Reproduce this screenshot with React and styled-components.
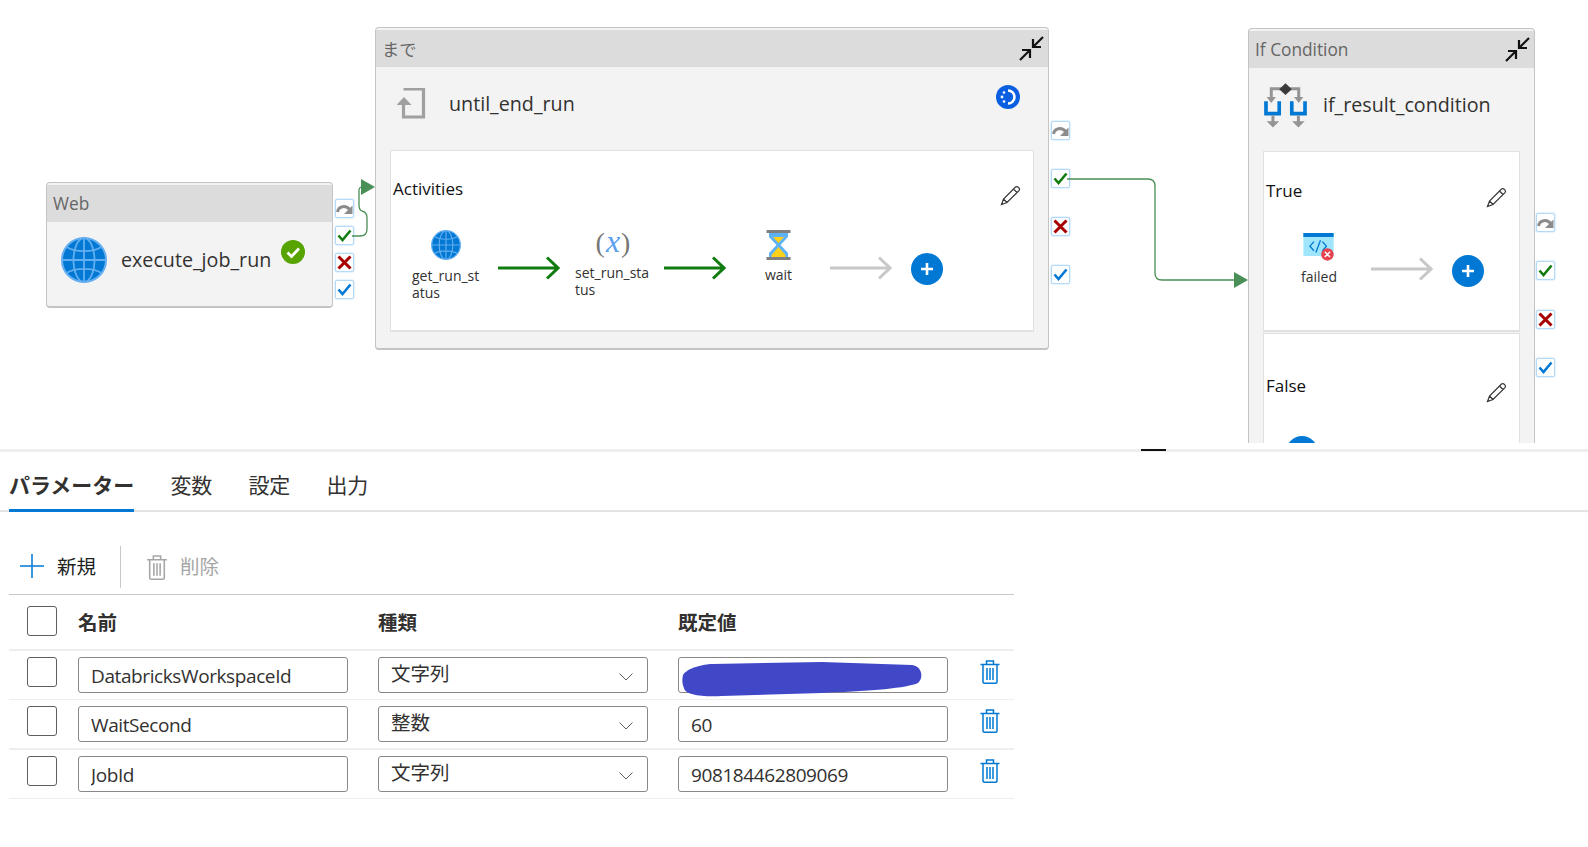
import React from 'react';
import styled, { createGlobalStyle } from 'styled-components';

const GlobalStyle = createGlobalStyle`
  html, body {
    margin: 0;
    background: #fff;
    font-family: "Open Sans", "Noto Sans CJK JP", sans-serif;
    color: #323130;
  }
`;

const Canvas = styled.div`
  position: relative;
  height: 443px;
  overflow: hidden;
  margin-bottom: 6px;
`;

const Placed = styled.div`
  position: absolute;
  left: ${(p) => p.$x}px;
  top: ${(p) => p.$y}px;
`;

const Wires = styled.svg`
  position: absolute;
  left: 0;
  top: 0;
  pointer-events: none;
`;

const Node = styled.div`
  box-sizing: border-box;
  width: ${(p) => p.$w}px;
  height: ${(p) => p.$h}px;
  padding-top: 2px;
  background: #f3f3f3;
  border: 1px solid #c4c4c4;
  border-bottom-width: 2px;
  border-radius: 4px;
`;

const NodeHeader = styled.div`
  display: flex;
  align-items: center;
  justify-content: space-between;
  height: 37px;
  padding: 0 3px 0 6px;
  background: #dcdcdc;
  color: #666;
  font-size: 17.3px;
`;

const NodeTitle = styled.div`
  display: flex;
  align-items: center;
  height: ${(p) => p.$h}px;
  padding-left: ${(p) => p.$pad}px;
  font-size: 19.7px;
  color: #323130;
`;

const TitleText = styled.span`
  margin-left: ${(p) => p.$gap}px;
  margin-bottom: 2px;
`;

const StatusDot = styled.svg`
  margin: -16px 0 0 10px;
`;

const SpinnerDot = styled.svg`
  margin-left: auto;
  margin-right: 28px;
  margin-top: -14px;
`;

const PinStack = styled.div`
  display: flex;
  flex-direction: column;
  gap: ${(p) => p.$gap}px;
`;

const Pin = styled.div`
  display: flex;
  align-items: center;
  justify-content: center;
  width: 19px;
  height: 19px;
  background: #fff;
  border: 1px solid #b4daf7;
  border-radius: 2px;
  box-shadow: 0 0 2px #a6d3f5;
  box-sizing: border-box;
`;

const Panel = styled.div`
  box-sizing: border-box;
  margin: ${(p) => p.$mt}px 14px 0;
  height: ${(p) => p.$h}px;
  background: #fff;
  border: 1px solid #e1e1e1;
  border-bottom-width: 2px;
`;

const PanelHead = styled.div`
  display: flex;
  justify-content: space-between;
  align-items: flex-start;
  padding: ${(p) => p.$top}px 12px 0 2px;
`;

const PanelName = styled.div`
  font-size: 17px;
  line-height: 22px;
  font-weight: 500;
  color: #111;
`;

const Pencil = styled.svg`
  margin-top: 7px;
`;

const FlowRow = styled.div`
  display: flex;
  align-items: flex-start;
  margin-top: ${(p) => p.$mt}px;
  padding-left: ${(p) => p.$pad}px;
`;

const Activity = styled.div`
  display: flex;
  flex-direction: column;
  align-items: center;
  flex: none;
  width: ${(p) => p.$w}px;
  margin-left: ${(p) => p.$ml || 0}px;
`;

const IconSlot = styled.div`
  display: flex;
  align-items: center;
  justify-content: center;
  height: 30px;
`;

const ActivityLabel = styled.div`
  width: fit-content;
  max-width: 100%;
  margin-top: ${(p) => p.$mt}px;
  font-size: 14px;
  line-height: 17px;
  word-break: break-all;
  color: #323130;
`;

const Formula = styled.div`
  margin-bottom: 6px;
  font-family: "Liberation Serif", serif;
  font-size: 28px;
  line-height: 30px;
  color: #777;
  em {
    color: #5b9ff0;
    font-size: 32px;
    font-style: italic;
    margin: 0 1px;
  }
`;

const FlowArrow = styled.svg`
  flex: none;
  margin-left: ${(p) => p.$ml}px;
  margin-top: ${(p) => p.$mt}px;
`;

const AddButton = styled.div`
  display: flex;
  align-items: center;
  justify-content: center;
  flex: none;
  width: 32px;
  height: 32px;
  margin-left: ${(p) => p.$ml || 0}px;
  margin-top: ${(p) => p.$mt || 0}px;
  border-radius: 50%;
  background: #0078d4;
`;

const Splitter = styled.div`
  position: relative;
  height: 3px;
  background: #eee;
`;

const SplitterHandle = styled.div`
  position: absolute;
  left: 1141px;
  top: 0;
  width: 25px;
  height: 2px;
  background: #111;
`;

const TabBar = styled.div`
  display: flex;
  gap: 36px;
  box-sizing: border-box;
  height: 60px;
  padding-left: 9px;
  border-bottom: 2px solid #e3e3e3;
`;

const Tab = styled.div`
  display: flex;
  align-items: center;
  box-sizing: border-box;
  height: 60px;
  padding-top: 7px;
  font-size: 21px;
  font-weight: ${(p) => (p.$active ? 700 : 400)};
  border-bottom: 3px solid ${(p) => (p.$active ? '#0078d4' : 'transparent')};
  color: #323130;
`;

const Body = styled.div`
  width: 1005px;
  margin-left: 9px;
`;

const Toolbar = styled.div`
  display: flex;
  align-items: center;
  padding: 34px 0 6px 11px;
  border-bottom: 1px solid #c8c8c8;
`;

const ToolPlus = styled.svg`
  margin-bottom: 2px;
`;

const ToolText = styled.span`
  margin: 0 0 3px 13px;
  font-size: 19.5px;
  color: ${(p) => (p.$off ? '#a6a6a6' : '#201f1e')};
`;

const ToolDivider = styled.div`
  width: 1px;
  height: 42px;
  margin: 0 26px 0 24px;
  background: #c8c8c8;
`;

const GridRow = styled.div`
  display: grid;
  grid-template-columns: 51px 300px 300px 302px auto;
  align-items: ${(p) => (p.$head ? 'center' : 'start')};
  box-sizing: border-box;
  height: ${(p) => (p.$head ? 56 : p.$thick ? 50 : 49)}px;
  padding: ${(p) => (p.$head ? 0 : 6)}px 0 0 18px;
  border-bottom: ${(p) => (p.$thick || p.$head ? 2 : 1)}px solid #eee;
`;

const HeadCell = styled.div`
  margin-bottom: 2px;
  font-size: 19.5px;
  font-weight: 700;
  color: #323130;
`;

const CheckBox = styled.div`
  box-sizing: border-box;
  width: 30px;
  height: 30px;
  border: 1px solid #605e5c;
  border-radius: 3px;
  background: #fff;
  margin-bottom: ${(p) => (p.$head ? 2 : 0)}px;
`;

const FieldWrap = styled.div`
  position: relative;
  width: 270px;
`;

const TextField = styled.input`
  display: block;
  box-sizing: border-box;
  width: 270px;
  height: 36px;
  padding: 2px 12px 0;
  border: 1px solid #8a8886;
  border-radius: 3px;
  outline: none;
  background: #fff;
  font-family: "Open Sans", "Noto Sans CJK JP", sans-serif;
  font-size: 19px;
  letter-spacing: -0.4px;
  color: #323130;
`;

const SelectBox = styled.div`
  display: flex;
  align-items: center;
  justify-content: space-between;
  box-sizing: border-box;
  width: 270px;
  height: 36px;
  padding: 0 14px 6px 12px;
  border: 1px solid #8a8886;
  border-radius: 3px;
  font-size: 19.5px;
  color: #323130;
`;

const Caret = styled.svg`
  margin-top: 10px;
`;

const Scribble = styled.svg`
  position: absolute;
  left: 4px;
  top: 5px;
`;

const TrashButton = styled.div`
  margin-top: 3px;
`;

function GlobeIcon({ size }) {
  return (
    <svg width={size} height={size} viewBox="0 0 46 46">
      <circle cx="23" cy="23" r="22" fill="#0078d4" stroke="#62aef0" strokeWidth="2" />
      <ellipse cx="23" cy="23" rx="10.5" ry="22" fill="none" stroke="#62aef0" strokeWidth="1.8" />
      <path d="M23 1V45M1 23H45M5.5 10C14 15.5 32 15.5 40.5 10M5.5 36C14 30.5 32 30.5 40.5 36" fill="none" stroke="#62aef0" strokeWidth="1.8" />
    </svg>
  );
}

function CollapseIcon() {
  return (
    <svg width="27" height="27" viewBox="0 0 27 27" fill="none" stroke="#111" strokeWidth="2.2">
      <path d="M25 2L15 12M15 4V12H23M2 25L12 15M4 15H12V23" />
    </svg>
  );
}

function PinIcon({ kind }) {
  if (kind === 'skip') {
    return (
      <svg width="17" height="15" viewBox="0 0 17 15">
        <path d="M1.5 11C2.5 5 10 3.5 14 9" fill="none" stroke="#8c8c8c" strokeWidth="3" />
        <path d="M16.5 4.5V13H8Z" fill="#8c8c8c" />
      </svg>
    );
  }
  if (kind === 'fail') {
    return (
      <svg width="15" height="15" viewBox="0 0 15 15">
        <path d="M1.5 1.5L13.5 13.5M13.5 1.5L1.5 13.5" stroke="#a80000" strokeWidth="3" />
      </svg>
    );
  }
  return (
    <svg width="15" height="13" viewBox="0 0 15 13">
      <path d="M1.5 6.5L5.5 11L13.5 1.5" fill="none" stroke={kind === 'done' ? '#0078d4' : '#107c10'} strokeWidth="2.6" />
    </svg>
  );
}

function Pins({ gap }) {
  return (
    <PinStack $gap={gap}>
      {['skip', 'ok', 'fail', 'done'].map((k) => (
        <Pin key={k}>
          <PinIcon kind={k} />
        </Pin>
      ))}
    </PinStack>
  );
}

function PencilIcon() {
  return (
    <Pencil width="21" height="21" viewBox="0 0 21 21" fill="none" stroke="#333" strokeWidth="1.2">
      <path d="M1.5 19.5L3.5 14L15.5 2Q17 1 18.7 2.6Q20.2 4.2 19 5.7L7 17.5ZM13.5 4L17 7.5M3.5 14L7 17.5" />
    </Pencil>
  );
}

function LongArrow({ color, ml, mt }) {
  return (
    <FlowArrow $ml={ml} $mt={mt} width="62" height="24" viewBox="0 0 62 24" fill="none" stroke={color} strokeWidth="3">
      <path d="M0 12H60M49 1.5L60 12L49 22.5" />
    </FlowArrow>
  );
}

function AddBtn({ ml, mt }) {
  return (
    <AddButton $ml={ml} $mt={mt}>
      <svg width="14" height="14" viewBox="0 0 14 14">
        <path d="M7 1V13M1 7H13" stroke="#fff" strokeWidth="2.6" />
      </svg>
    </AddButton>
  );
}

function HourglassIcon() {
  return (
    <svg width="25" height="30" viewBox="0 0 25 30">
      <path d="M3 2H22V7L14.5 15L22 23V28H3V23L10.5 15L3 7Z" fill="#5db3f5" />
      <path d="M7 7H18L12.5 13ZM12.5 17L19.5 25V27H5.5V25Z" fill="#ffd11a" />
      <rect x="0.5" y="0" width="24" height="3" fill="#808080" />
      <rect x="0.5" y="27" width="24" height="3" fill="#808080" />
    </svg>
  );
}

function LoopIcon() {
  return (
    <svg width="30" height="32" viewBox="1.5 1 30 32">
      <path d="M8 2H28V30H8V16" fill="none" stroke="#a0a0a0" strokeWidth="3.2" />
      <path d="M1 18L8.5 10L16 18Z" fill="#a0a0a0" />
    </svg>
  );
}

function ConditionIcon() {
  return (
    <svg width="43" height="45" viewBox="100 190 130 135">
      <path d="M122 240V207H205V240" fill="none" stroke="#949494" strokeWidth="9" />
      <path d="M108 232H136L122 250ZM191 232H219L205 250Z" fill="#949494" />
      <path d="M165 190L184 208L165 226L146 208Z" fill="#3a3a3a" />
      <path d="M106 245V282H146V245M184 245V282H224V245" fill="none" stroke="#0078d4" strokeWidth="11" />
      <path d="M127 288V310M204 288V310" stroke="#949494" strokeWidth="9" />
      <path d="M108 305H146L127 324ZM185 305H223L204 324Z" fill="#949494" />
    </svg>
  );
}

function FailedWebIcon() {
  return (
    <svg width="32" height="28" viewBox="220 38 95 85">
      <rect x="220" y="38" width="92" height="70" fill="#9fe6fc" />
      <rect x="220" y="38" width="92" height="12" fill="#0078d4" />
      <path d="M252 64L240 78L252 92M278 64L290 78L278 92M272 60L258 97" fill="none" stroke="#0078d4" strokeWidth="4" />
      <circle cx="293" cy="103" r="19" fill="#e8414e" />
      <path d="M285 95L301 111M301 95L285 111" stroke="#fff" strokeWidth="4.5" />
    </svg>
  );
}

function TrashIcon({ color, w, h }) {
  return (
    <svg width={w} height={h} viewBox="0 0 19 24" fill="none" stroke={color} strokeWidth="1.5">
      <path d="M0 4.5H19M6 4.5V1H13V4.5M2.5 4.5V22Q2.5 23.2 4 23.2H15Q16.5 23.2 16.5 22V4.5" />
      <path d="M6.5 8V20M9.5 8V20M12.5 8V20" />
    </svg>
  );
}

const params = [
  { name: 'DatabricksWorkspaceId', type: '文字列', value: '', hidden: true },
  { name: 'WaitSecond', type: '整数', value: '60', thick: true },
  { name: 'JobId', type: '文字列', value: '908184462809069' },
];

const tabs = ['パラメーター', '変数', '設定', '出力'];

export default function App() {
  return (
    <>
      <GlobalStyle />
      <Canvas>
        <Placed $x={46} $y={182}>
          <Node $w={287} $h={126}>
            <NodeHeader>Web</NodeHeader>
            <NodeTitle $h={76} $pad={14}>
              <GlobeIcon size={46} />
              <TitleText $gap={14}>execute_job_run</TitleText>
              <StatusDot width="24" height="24" viewBox="0 0 24 24">
                <circle cx="12" cy="12" r="12" fill="#57a300" />
                <path d="M6.5 12.5L10.5 16.5L18 8.5" fill="none" stroke="#fff" strokeWidth="2.8" />
              </StatusDot>
            </NodeTitle>
          </Node>
        </Placed>
        <Placed $x={335} $y={199}>
          <Pins gap={8} />
        </Placed>

        <Placed $x={375} $y={27}>
          <Node $w={674} $h={323}>
            <NodeHeader>
              まで
              <CollapseIcon />
            </NodeHeader>
            <NodeTitle $h={74} $pad={21}>
              <LoopIcon />
              <TitleText $gap={22}>until_end_run</TitleText>
              <SpinnerDot width="24" height="24" viewBox="0 0 24 24">
                <circle cx="12" cy="12" r="12" fill="#0a5fe0" />
                <path d="M12 5.5A6.5 6.5 0 0 1 12 18.5" fill="none" stroke="#fff" strokeWidth="2.6" />
                <circle cx="6" cy="12" r="1.4" fill="#fff" />
                <circle cx="8" cy="7.5" r="1.3" fill="#fff" />
                <circle cx="8" cy="16.5" r="1.3" fill="#fff" />
              </SpinnerDot>
            </NodeTitle>
            <Panel $mt={9} $h={182}>
              <PanelHead $top={27}>
                <PanelName>Activities</PanelName>
                <PencilIcon />
              </PanelHead>
              <FlowRow $mt={24} $pad={21}>
                <Activity $w={68}>
                  <IconSlot>
                    <GlobeIcon size={30} />
                  </IconSlot>
                  <ActivityLabel $mt={7}>get_run_status</ActivityLabel>
                </Activity>
                <LongArrow color="#107c10" ml={18} mt={26} />
                <Activity $w={76} $ml={15}>
                  <IconSlot>
                    <Formula>
                      (<em>x</em>)
                    </Formula>
                  </IconSlot>
                  <ActivityLabel $mt={4}>set_run_status</ActivityLabel>
                </Activity>
                <LongArrow color="#107c10" ml={13} mt={26} />
                <Activity $w={71} $ml={17}>
                  <IconSlot>
                    <HourglassIcon />
                  </IconSlot>
                  <ActivityLabel $mt={6}>wait</ActivityLabel>
                </Activity>
                <LongArrow color="#c8c8c8" ml={16} mt={26} />
                <AddBtn ml={19} mt={23} />
              </FlowRow>
            </Panel>
          </Node>
        </Placed>
        <Placed $x={1051} $y={121}>
          <Pins gap={29} />
        </Placed>

        <Placed $x={1248} $y={28}>
          <Node $w={287} $h={480}>
            <NodeHeader>
              If Condition
              <CollapseIcon />
            </NodeHeader>
            <NodeTitle $h={74} $pad={15}>
              <ConditionIcon />
              <TitleText $gap={16}>if_result_condition</TitleText>
            </NodeTitle>
            <Panel $mt={9} $h={181}>
              <PanelHead $top={28}>
                <PanelName>True</PanelName>
                <PencilIcon />
              </PanelHead>
              <FlowRow $mt={24} $pad={22}>
                <Activity $w={66}>
                  <IconSlot>
                    <FailedWebIcon />
                  </IconSlot>
                  <ActivityLabel $mt={6}>failed</ActivityLabel>
                </Activity>
                <LongArrow color="#c8c8c8" ml={19} mt={25} />
                <AddBtn ml={19} mt={23} />
              </FlowRow>
            </Panel>
            <Panel $mt={1} $h={180}>
              <PanelHead $top={41}>
                <PanelName>False</PanelName>
                <PencilIcon />
              </PanelHead>
              <FlowRow $mt={33} $pad={22}>
                <AddBtn />
              </FlowRow>
            </Panel>
          </Node>
        </Placed>
        <Placed $x={1536} $y={213}>
          <Pins gap={29.3} />
        </Placed>

        <Wires width="1588" height="443" viewBox="0 0 1588 443">
          <g fill="none" stroke="#4a8f55" strokeWidth="1.3">
            <path d="M352 236H360Q367 236 367 229V218Q367 212 362 211Q359 210 359 205V190Q359 188 361 187" />
            <path d="M1067 179H1148Q1155 179 1155 186V273Q1155 280 1162 280H1236" />
          </g>
          <path d="M361 179L375 187L361 195Z" fill="#4a8f55" />
          <path d="M1234 272L1248 280L1234 288Z" fill="#4a8f55" />
        </Wires>
      </Canvas>

      <Splitter>
        <SplitterHandle />
      </Splitter>

      <TabBar>
        {tabs.map((t, i) => (
          <Tab key={t} $active={i === 0}>
            {t}
          </Tab>
        ))}
      </TabBar>

      <Body>
        <Toolbar>
          <ToolPlus width="24" height="24" viewBox="0 0 24 24">
            <path d="M12 0V24M0 12H24" stroke="#0078d4" strokeWidth="1.5" />
          </ToolPlus>
          <ToolText>新規</ToolText>
          <ToolDivider />
          <TrashIcon color="#a6a6a6" w={20} h={25} />
          <ToolText $off>削除</ToolText>
        </Toolbar>

        <GridRow $head>
          <CheckBox $head />
          <HeadCell>名前</HeadCell>
          <HeadCell>種類</HeadCell>
          <HeadCell>既定値</HeadCell>
        </GridRow>

        {params.map((p) => (
          <GridRow key={p.name} $thick={p.thick}>
            <CheckBox />
            <FieldWrap>
              <TextField readOnly defaultValue={p.name} />
            </FieldWrap>
            <SelectBox>
              {p.type}
              <Caret width="14" height="8" viewBox="0 0 14 8" fill="none" stroke="#605e5c" strokeWidth="1">
                <path d="M0.5 0.5L7 7L13.5 0.5" />
              </Caret>
            </SelectBox>
            <FieldWrap>
              <TextField readOnly defaultValue={p.value} />
              {p.hidden && (
                <Scribble width="241" height="35" viewBox="0 0 241 35">
                  <path d="M1 13C5 6 22 2 30 2L140 0L230 3C240 4 242 16 236 21C225 26 190 29 140 31L40 34C20 35 3 33 2 26C0 22 0 17 1 13Z" fill="#4048c8" />
                </Scribble>
              )}
            </FieldWrap>
            <TrashButton>
              <TrashIcon color="#0078d4" w={20} h={24} />
            </TrashButton>
          </GridRow>
        ))}
      </Body>
    </>
  );
}
